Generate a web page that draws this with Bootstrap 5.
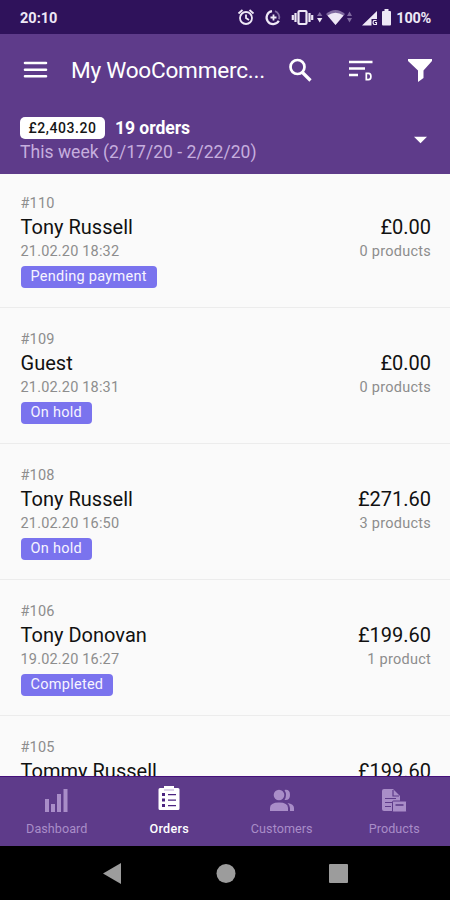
<!DOCTYPE html>
<html lang="en">
<head>
<meta charset="utf-8">
<meta name="viewport" content="width=device-width, initial-scale=1">
<title>Orders</title>
<link rel="stylesheet" href="https://cdn.jsdelivr.net/npm/bootstrap@5.3.0/dist/css/bootstrap.min.css">
<style>
body{font-family:Roboto,"Liberation Sans",sans-serif;background:#fafafa;width:450px;height:900px;line-height:1}
svg{display:block;flex:none}
.statusbar{height:34px;background:#2f125b;font-size:14.5px;font-weight:700;color:#eee8f6;padding:2px 19px 0 20px}
.statusbar span{padding-top:2px}
.percent{letter-spacing:-.25px}
.appbar{height:140px;background:#5e3b8a;color:#fff}
.toolbar-row{height:72px;padding:0 17px 0 23px}
.app-title{font-size:22.6px;line-height:32px;width:200px;margin-left:23px;letter-spacing:-.25px;padding-top:1px}
.search-icon{margin-left:17px}
.sort-icon{margin-left:36px}
.summary{padding:11px 23px 0 20px}
.total{background:#fff;color:#161616;font-size:14px;font-weight:500;width:85px;height:22px;border-radius:5px;letter-spacing:.55px}
.count{font-size:17.6px;font-weight:700;margin-left:10px;letter-spacing:-.07px;padding-top:2px}
.period{font-size:17.5px;line-height:22px;color:#c6aede;margin-top:2px;letter-spacing:.04px}
.caret{margin-top:-1px}
.orders{min-height:0}
.order{height:136px;padding:24px 19px 0 20.5px;border-bottom:1px solid #ececec;flex:none}
.order:first-child{height:134px;padding-top:22px}
.muted{font-size:14.5px;line-height:16px;color:#8d8d8d;font-weight:400;letter-spacing:.18px}
.text-end .muted{letter-spacing:.26px}
.who{font-size:20px;line-height:24px;color:#111;margin:3px 0 5px;letter-spacing:.02px}
.text-end .who{letter-spacing:0}
.state{background:#7a73ee;color:#f7f5ff;font-size:14.5px;line-height:22px;height:22px;border-radius:4px;padding:0 10px;margin-top:6px;letter-spacing:.27px}
.tabs{height:70px;background:#5e3b8a;border-top:1px solid #45107b;color:#a98dc8;font-size:12.6px}
.tabs a{color:inherit;padding-top:9px;letter-spacing:.05px}
.tabs a.active{color:#fff;font-weight:500;padding-top:7px;letter-spacing:.25px}
.tabs a svg{margin-left:1px}
.tabs a span{margin-top:7px;line-height:15px;padding-left:1px}
.tabs a.active span{margin-top:9px}
.sysnav{height:54px;background:#000;color:#9c9c9c}
</style>
</head>
<body class="d-flex flex-column overflow-hidden">
<div class="statusbar d-flex align-items-center justify-content-between flex-shrink-0">
  <span>20:10</span>
  <div class="d-flex align-items-center">
    <svg width="160" height="22" viewBox="236 7 160 22" fill="none" stroke="#eee8f6" stroke-width="1.8">
      <circle cx="246" cy="18" r="6"/><path d="M246 14.500V18l3 2M238.500 13.500l4-3.500M253.500 13.500l-4-3.500"/>
      <path d="M272 11.200a6.500 6.500 0 1 0 6.800 9.500" stroke-width="2.200"/><path d="M275 11.200a6.500 6.500 0 0 1 4 8" stroke="#806aa0"/><path d="M273.500 14.500v6M270.500 17.500h6"/>
      <rect x="298.500" y="11" width="8" height="13" rx="1" stroke-width="2.200"/><path d="M295.500 13v9M309.500 13v9M292.800 15v5M312.200 15v5" stroke-width="2.200"/>
      <g stroke="none" fill="#eee8f6"><path d="M317 16l2.700-4 2.700 4z" fill="#806aa0"/><path d="M317 18h5.400l-2.700 4.500z"/><path d="M326 14q9.500-8 19 0l-9.500 11z" fill="#806aa0"/><path d="M327.500 15.500q8-5.500 16 0l-8 9.500z"/><path d="M347 16l2.500-4.500 2.500 4.500zM347 18h5l-2.500 4.500z" fill="#806aa0"/><path d="M362 25.500l15-14.500v8h-5.500v6.500z"/><path d="M382 12q0-1 1-1h1.500V9h4v2h1.500q1 0 1 1v12.500q0 1-1 1h-7q-1 0-1-1z"/></g>
      <path d="M376.500 20.500h-2.700q-1.500 2.300 0 4h2.700v-2h-1.500" stroke-width="1.100"/>
    </svg>
    <span class="percent">100%</span>
  </div>
</div>
<header class="appbar flex-shrink-0">
  <div class="toolbar-row d-flex align-items-center">
    <svg width="25" height="18" viewBox="0 0 25 18" stroke="#fff" stroke-width="2.600" stroke-linecap="round"><path d="M2 2h21M2 8.700h21M2 15.300h21"/></svg>
    <div class="app-title text-nowrap">My WooCommerc...</div>
    <svg class="search-icon" width="25" height="25" viewBox="0 0 25 25" fill="none" stroke="#fff"><circle cx="9.500" cy="9" r="7" stroke-width="2.700"/><path d="M14.500 14.500l8 8" stroke-width="3.200"/></svg>
    <svg class="sort-icon" width="26" height="22" viewBox="0 0 26 22" fill="none" stroke="#fff" stroke-width="2.500"><path d="M0 3h23.500M0 9.500h16M0 16h9"/><path d="M17.300 14.300h2.200q2.400 0 2.400 3.200t-2.400 3.200h-2.200z" stroke-width="1.700"/></svg>
    <svg class="ms-auto" width="26" height="24" viewBox="0 0 26 24" fill="#fff"><path d="M1 1h24v2l-8.500 9.500V20L11 24V12.500L1 3z"/></svg>
  </div>
  <div class="summary d-flex align-items-center justify-content-between">
    <div>
      <div class="d-flex align-items-center"><span class="total d-flex align-items-center justify-content-center">£2,403.20</span><span class="count">19 orders</span></div>
      <div class="period">This week (2/17/20 - 2/22/20)</div>
    </div>
    <svg class="caret" width="13" height="8" viewBox="0 0 14 8" fill="#fff"><path d="M0 .5h14L7 7.500z"/></svg>
  </div>
</header>
<main class="orders flex-grow-1 overflow-hidden d-flex flex-column">
  <article class="order d-flex justify-content-between"><div><div class="muted">#110</div><div class="who">Tony Russell</div><div class="muted">21.02.20 18:32</div><span class="state d-inline-block">Pending payment</span></div><div class="text-end pt-3"><div class="who">£0.00</div><div class="muted">0 products</div></div></article>
  <article class="order d-flex justify-content-between"><div><div class="muted">#109</div><div class="who">Guest</div><div class="muted">21.02.20 18:31</div><span class="state d-inline-block">On hold</span></div><div class="text-end pt-3"><div class="who">£0.00</div><div class="muted">0 products</div></div></article>
  <article class="order d-flex justify-content-between"><div><div class="muted">#108</div><div class="who">Tony Russell</div><div class="muted">21.02.20 16:50</div><span class="state d-inline-block">On hold</span></div><div class="text-end pt-3"><div class="who">£271.60</div><div class="muted">3 products</div></div></article>
  <article class="order d-flex justify-content-between"><div><div class="muted">#106</div><div class="who">Tony Donovan</div><div class="muted">19.02.20 16:27</div><span class="state d-inline-block">Completed</span></div><div class="text-end pt-3"><div class="who">£199.60</div><div class="muted">1 product</div></div></article>
  <article class="order d-flex justify-content-between"><div><div class="muted">#105</div><div class="who">Tommy Russell</div></div><div class="text-end pt-3"><div class="who">£199.60</div></div></article>
</main>
<nav class="tabs row g-0 flex-shrink-0 text-center">
  <a href="#" class="col d-flex flex-column align-items-center text-decoration-none"><svg width="26" height="28" viewBox="0 0 26 28" fill="currentColor"><path d="M1 13h4v13H1zM7 18h4v8H7zM13 8h4v18h-4zM19.500 3h4v23h-4z"/></svg><span>Dashboard</span></a>
  <a href="#" class="col d-flex flex-column align-items-center text-decoration-none active"><svg width="24" height="28" viewBox="0 0 24 28"><path d="M3 4h4V2h10v2h4q1.500 0 1.500 1.500v19q0 1.500-1.500 1.500H3q-1.500 0-1.500-1.500v-19Q1.500 4 3 4z" fill="#fff"/><path d="M7 6h10" stroke="#b9a5d2"/><path d="M5 9h3v3H5zM5 14.500h3v3H5zM5 20h3v3H5zM11 10h8v1.300h-8zM11 15.500h8v1.300h-8zM11 21h8v1.300h-8z" fill="#4b2380"/></svg><span>Orders</span></a>
  <a href="#" class="col d-flex flex-column align-items-center text-decoration-none"><svg width="26" height="28" viewBox="0 0 26 28" fill="currentColor"><circle cx="10" cy="9" r="5.300"/><path d="M1 25v-3q0-5.500 9-5.500t9 5.500v3zM15.500 3.900q5.500-.8 5.500 5t-5.500 5q3-5 0-10zM18.500 17q6.500 1 6.500 5v3h-4v-3q0-3-2.500-5z"/></svg><span>Customers</span></a>
  <a href="#" class="col d-flex flex-column align-items-center text-decoration-none"><svg width="26" height="28" viewBox="0 0 26 28"><path d="M3 3h9l7 7v15H3q-2 0-2-2V5q0-2 2-2z" fill="currentColor"/><path d="M12 4v6h6M4 12.500h11M4 16.500h7M4 20.500h6" stroke="#5e3b8a" stroke-width="1.200" fill="none"/><rect x="11.500" y="15" width="14" height="11" rx="1" fill="currentColor" stroke="#5e3b8a"/><path d="M14.500 19h8" stroke="#5e3b8a" stroke-width="1.600"/></svg><span>Products</span></a>
</nav>
<footer class="sysnav d-flex align-items-center justify-content-center flex-shrink-0">
  <svg width="245" height="22" viewBox="0 0 245 22" fill="currentColor"><path d="M0 11.500L18 1v21z"/><circle cx="123" cy="11.500" r="9.500"/><rect x="226" y="2" width="19" height="19" rx="1"/></svg>
</footer>
<script src="https://cdn.jsdelivr.net/npm/bootstrap@5.3.0/dist/js/bootstrap.bundle.min.js"></script>
</body>
</html>
